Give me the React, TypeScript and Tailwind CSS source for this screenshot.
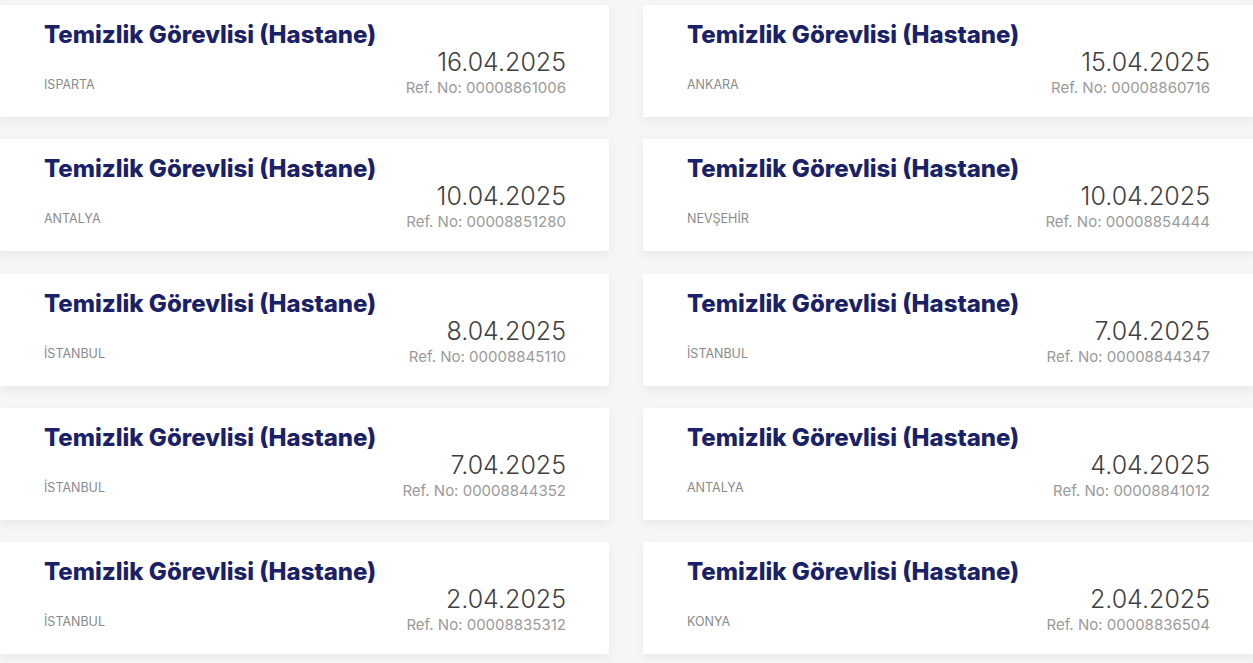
import React from "react";

type Ilan = {
  city: string;
  date: string;
  ref: string;
};

const ilanlar: Ilan[] = [
  { city: "ISPARTA", date: "16.04.2025", ref: "00008861006" },
  { city: "ANKARA", date: "15.04.2025", ref: "00008860716" },
  { city: "ANTALYA", date: "10.04.2025", ref: "00008851280" },
  { city: "NEVŞEHİR", date: "10.04.2025", ref: "00008854444" },
  { city: "İSTANBUL", date: "8.04.2025", ref: "00008845110" },
  { city: "İSTANBUL", date: "7.04.2025", ref: "00008844347" },
  { city: "İSTANBUL", date: "7.04.2025", ref: "00008844352" },
  { city: "ANTALYA", date: "4.04.2025", ref: "00008841012" },
  { city: "İSTANBUL", date: "2.04.2025", ref: "00008835312" },
  { city: "KONYA", date: "2.04.2025", ref: "00008836504" },
];

const IlanCard: React.FC<{ ilan: Ilan }> = ({ ilan }) => {
  return (
    <div className="bg-white h-[112px] pl-[44px] pr-[43px] pt-[15px] shadow-[0_4px_10px_rgba(0,0,0,0.06)]">
      <h3 className="text-[24px] leading-[30px] font-extrabold text-[#1a2167]">
        Temizlik Görevlisi (Hastane)
      </h3>
      <div className="flex justify-between items-end -mt-[3px]">
        <span className="text-[12.5px] leading-[16px] text-[#8a8a8a] mb-[5px]">
          {ilan.city}
        </span>
        <div className="flex flex-col items-end">
          <span className="text-[25px] leading-[30px] font-light text-[#3f3f3f]">
            {ilan.date}
          </span>
          <span className="text-[15px] leading-[20px] mt-[1px] text-[#9a9a9a]">
            Ref. No: {ilan.ref}
          </span>
        </div>
      </div>
    </div>
  );
};

export default function App() {
  return (
    <div className="min-h-[663px] bg-[#f6f6f6] pt-[5px] font-['Inter',sans-serif] overflow-hidden">
      <div className="grid grid-cols-[609px_610px] gap-x-[34px] gap-y-[22.3px]">
        {ilanlar.map((ilan, i) => (
          <IlanCard key={i} ilan={ilan} />
        ))}
      </div>
    </div>
  );
}
